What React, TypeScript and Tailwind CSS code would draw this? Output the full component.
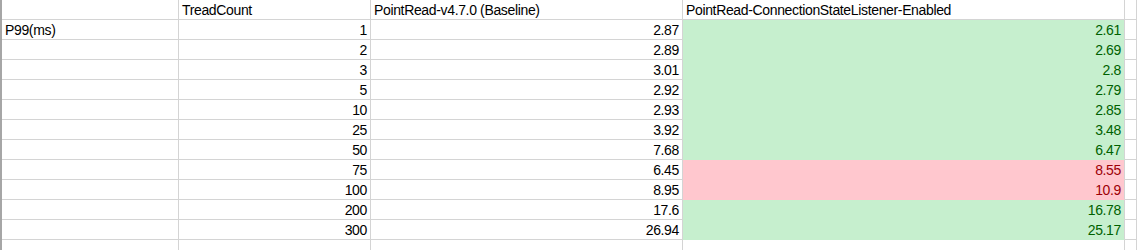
const rows: { label: string; count: string; base: string; val: string; bad?: boolean }[] = [
  { label: "P99(ms)", count: "1", base: "2.87", val: "2.61" },
  { label: "", count: "2", base: "2.89", val: "2.69" },
  { label: "", count: "3", base: "3.01", val: "2.8" },
  { label: "", count: "5", base: "2.92", val: "2.79" },
  { label: "", count: "10", base: "2.93", val: "2.85" },
  { label: "", count: "25", base: "3.92", val: "3.48" },
  { label: "", count: "50", base: "7.68", val: "6.47" },
  { label: "", count: "75", base: "6.45", val: "8.55", bad: true },
  { label: "", count: "100", base: "8.95", val: "10.9", bad: true },
  { label: "", count: "200", base: "17.6", val: "16.78" },
  { label: "", count: "300", base: "26.94", val: "25.17" },
];

const cell = "h-5 border-r border-b border-[#d4d4d4] px-[3px] pt-px leading-[19px] whitespace-nowrap overflow-hidden";

export default function App() {
  return (
    <div className="w-[1137px] h-[250px] overflow-hidden bg-white font-['Liberation_Sans',Arial,sans-serif] text-[14px] tracking-[-0.35px] text-black">
      <div className="grid grid-cols-[177px_192px_312px_442px_1fr] border-l-2 border-[#a6a6a6]">
        <div className={cell}></div>
        <div className={cell}>TreadCount</div>
        <div className={cell}>PointRead-v4.7.0 (Baseline)</div>
        <div className={cell}>PointRead-ConnectionStateListener-Enabled</div>
        <div className={cell}></div>

        {rows.map((r) => (
          <div key={r.count} className="contents">
            <div className={cell}>{r.label}</div>
            <div className={`${cell} text-right`}>{r.count}</div>
            <div className={`${cell} text-right`}>{r.base}</div>
            <div
              className={`${cell} text-right ${
                r.bad
                  ? "bg-[#ffc7ce] text-[#9c0006] border-b-[#ffc7ce]"
                  : "bg-[#c6efce] text-[#006100] border-b-[#c6efce]"
              }`}
            >
              {r.val}
            </div>
            <div className={cell}></div>
          </div>
        ))}

        <div className={cell}></div>
        <div className={cell}></div>
        <div className={cell}></div>
        <div className={cell}></div>
        <div className={cell}></div>
      </div>
    </div>
  );
}
